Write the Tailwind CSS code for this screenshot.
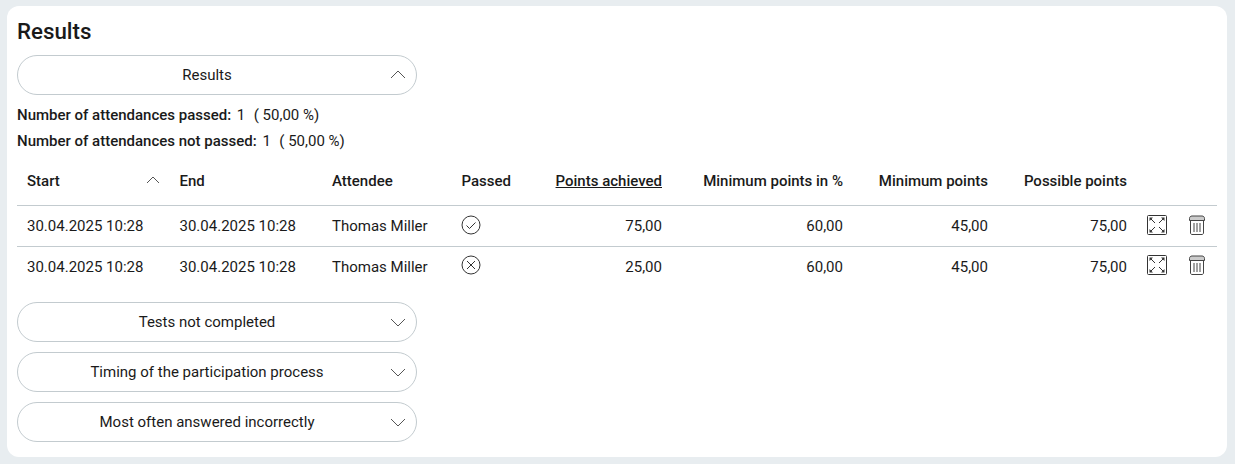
<!DOCTYPE html>
<html lang="en">
<head>
  <meta charset="UTF-8">
  <title>Results</title>
  <script src="https://cdn.jsdelivr.net/npm/@tailwindcss/browser@4"></script>
</head>
<body class="bg-[#e8edf0] font-['Roboto',sans-serif] text-[15px] text-[#1a1a1a] overflow-hidden">
  <div class="mx-[8px] mt-[6px] h-[451px] w-[1220px] -translate-x-px rounded-[12px] bg-white px-[10px] pt-[12px]">
    <h2 class="h-[27px] text-[22.3px] leading-[27px] font-medium">Results</h2>

    <!-- Results accordion -->
    <button class="relative mt-[10px] block h-[40px] w-[400px] rounded-[20px] border border-[#c3cbcf] pr-[20px] text-center">
      Results
      <svg class="absolute top-[13px] right-[10px]" width="16" height="10" viewBox="0 0 16 10" fill="none" stroke="#555" stroke-width="1"><path d="M1 9L8 2l7 7"/></svg>
    </button>

    <div class="mt-[10px] leading-[21px]">
      <p><span class="mr-[2px] font-medium">Number of attendances passed:</span> 1 <span class="ml-px">&nbsp;( 50,00 %)</span></p>
      <p class="mt-[5px]"><span class="mr-[2px] font-medium">Number of attendances not passed:</span> 1 <span class="ml-px">&nbsp;( 50,00 %)</span></p>
    </div>

    <table class="mt-[4px] w-[1200px] table-fixed border-collapse">
      <colgroup>
        <col class="w-[152.5px]"><col class="w-[152.5px]"><col class="w-[129.5px]"><col class="w-[93.5px]"><col class="w-[127px]"><col class="w-[181px]"><col class="w-[145px]"><col class="w-[139px]"><col class="w-[80px]">
      </colgroup>
      <thead>
        <tr class="h-[49px] border-b border-[#c3cbcf] font-medium">
          <th class="relative px-[10px] pt-[2px] text-left font-medium">Start
            <svg class="absolute top-[20px] right-[10px]" width="14" height="8" viewBox="0 0 14 8" fill="none" stroke="#555" stroke-width="1"><path d="M1 7l6-6 6 6"/></svg>
          </th>
          <th class="px-[10px] pt-[2px] text-left font-medium">End</th>
          <th class="px-[10px] pt-[2px] text-left font-medium">Attendee</th>
          <th class="px-[10px] pt-[2px] text-left font-medium">Passed</th>
          <th class="px-[10px] pt-[2px] text-right font-medium underline">Points achieved</th>
          <th class="px-[10px] pt-[2px] text-right font-medium">Minimum points in %</th>
          <th class="px-[10px] pt-[2px] text-right font-medium">Minimum points</th>
          <th class="px-[10px] pt-[2px] text-right font-medium">Possible points</th>
          <th></th>
        </tr>
      </thead>
      <tbody>
        <tr class="h-[41px] border-b border-[#c3cbcf]">
          <td class="px-[10px] pt-[2px]">30.04.2025 10:28</td>
          <td class="px-[10px] pt-[2px]">30.04.2025 10:28</td>
          <td class="px-[10px] pt-[2px]">Thomas Miller</td>
          <td class="px-[9px]">
            <svg class="block -translate-y-px" width="20" height="20" viewBox="0 0 20 20" fill="none" stroke="#333" stroke-width="1"><circle cx="10" cy="10" r="9"/><path d="M5.500 10.500l3 3 6-6"/></svg>
          </td>
          <td class="px-[10px] pt-[2px] text-right">75,00</td>
          <td class="px-[10px] pt-[2px] text-right">60,00</td>
          <td class="px-[10px] pt-[2px] text-right">45,00</td>
          <td class="px-[10px] pt-[2px] text-right">75,00</td>
          <td class="pl-[10px]">
            <div class="flex -translate-y-px items-center gap-[22px]">
              <svg width="20" height="20" viewBox="0 0 20 20" fill="none" stroke="#333" stroke-width="1"><rect x="0.5" y="0.5" width="19" height="19" rx="1"/><path d="M3 3l5 5M17 3l-5 5M3 17l5-5M17 17l-5-5"/><path fill="#333" stroke="none" d="M2.500 2.500h3.500l-3.500 3.500zM17.500 2.500h-3.500l3.500 3.500zM2.500 17.500h3.500l-3.500-3.500zM17.500 17.500h-3.500l3.500-3.500z"/></svg>
              <svg width="16" height="20" viewBox="0 0 16 20" fill="none" stroke="#444" stroke-width="1"><path fill="#ccc" d="M0.500 5.500V3.500C0.500 2 1.500 1 3 1h10c1.500 0 2.500 1 2.500 2.500v2z"/><path d="M1.500 6v12c0 .8.7 1.500 1.500 1.500h10c.8 0 1.500-.7 1.500-1.500V6M5 8v9M8 8v9M11 8v9"/></svg>
            </div>
          </td>
        </tr>
        <tr class="h-[41px]">
          <td class="px-[10px]">30.04.2025 10:28</td>
          <td class="px-[10px]">30.04.2025 10:28</td>
          <td class="px-[10px]">Thomas Miller</td>
          <td class="px-[9px]">
            <svg class="block -translate-y-[2px]" width="20" height="20" viewBox="0 0 20 20" fill="none" stroke="#333" stroke-width="1"><circle cx="10" cy="10" r="9"/><path d="M6 6l8 8M14 6l-8 8"/></svg>
          </td>
          <td class="px-[10px] text-right">25,00</td>
          <td class="px-[10px] text-right">60,00</td>
          <td class="px-[10px] text-right">45,00</td>
          <td class="px-[10px] text-right">75,00</td>
          <td class="pl-[10px]">
            <div class="flex -translate-y-[2px] items-center gap-[22px]">
              <svg width="20" height="20" viewBox="0 0 20 20" fill="none" stroke="#333" stroke-width="1"><rect x="0.5" y="0.5" width="19" height="19" rx="1"/><path d="M3 3l5 5M17 3l-5 5M3 17l5-5M17 17l-5-5"/><path fill="#333" stroke="none" d="M2.500 2.500h3.500l-3.500 3.500zM17.500 2.500h-3.500l3.500 3.500zM2.500 17.500h3.500l-3.500-3.500zM17.500 17.500h-3.500l3.500-3.500z"/></svg>
              <svg width="16" height="20" viewBox="0 0 16 20" fill="none" stroke="#444" stroke-width="1"><path fill="#ccc" d="M0.500 5.500V3.500C0.500 2 1.500 1 3 1h10c1.500 0 2.500 1 2.500 2.500v2z"/><path d="M1.500 6v12c0 .8.7 1.500 1.500 1.500h10c.8 0 1.500-.7 1.500-1.500V6M5 8v9M8 8v9M11 8v9"/></svg>
            </div>
          </td>
        </tr>
      </tbody>
    </table>

    <!-- Collapsed accordions -->
    <div class="mt-[15px] flex w-[400px] flex-col gap-[10px]">
      <button class="relative h-[40px] rounded-[20px] border border-[#c3cbcf] pr-[20px] text-center">
        Tests not completed
        <svg class="absolute top-[15px] right-[10px]" width="16" height="10" viewBox="0 0 16 10" fill="none" stroke="#555" stroke-width="1"><path d="M1 1l7 7 7-7"/></svg>
      </button>
      <button class="relative h-[40px] rounded-[20px] border border-[#c3cbcf] pr-[20px] text-center">
        Timing of the participation process
        <svg class="absolute top-[15px] right-[10px]" width="16" height="10" viewBox="0 0 16 10" fill="none" stroke="#555" stroke-width="1"><path d="M1 1l7 7 7-7"/></svg>
      </button>
      <button class="relative h-[40px] rounded-[20px] border border-[#c3cbcf] pr-[20px] text-center">
        Most often answered incorrectly
        <svg class="absolute top-[15px] right-[10px]" width="16" height="10" viewBox="0 0 16 10" fill="none" stroke="#555" stroke-width="1"><path d="M1 1l7 7 7-7"/></svg>
      </button>
    </div>
  </div>
</body>
</html>
